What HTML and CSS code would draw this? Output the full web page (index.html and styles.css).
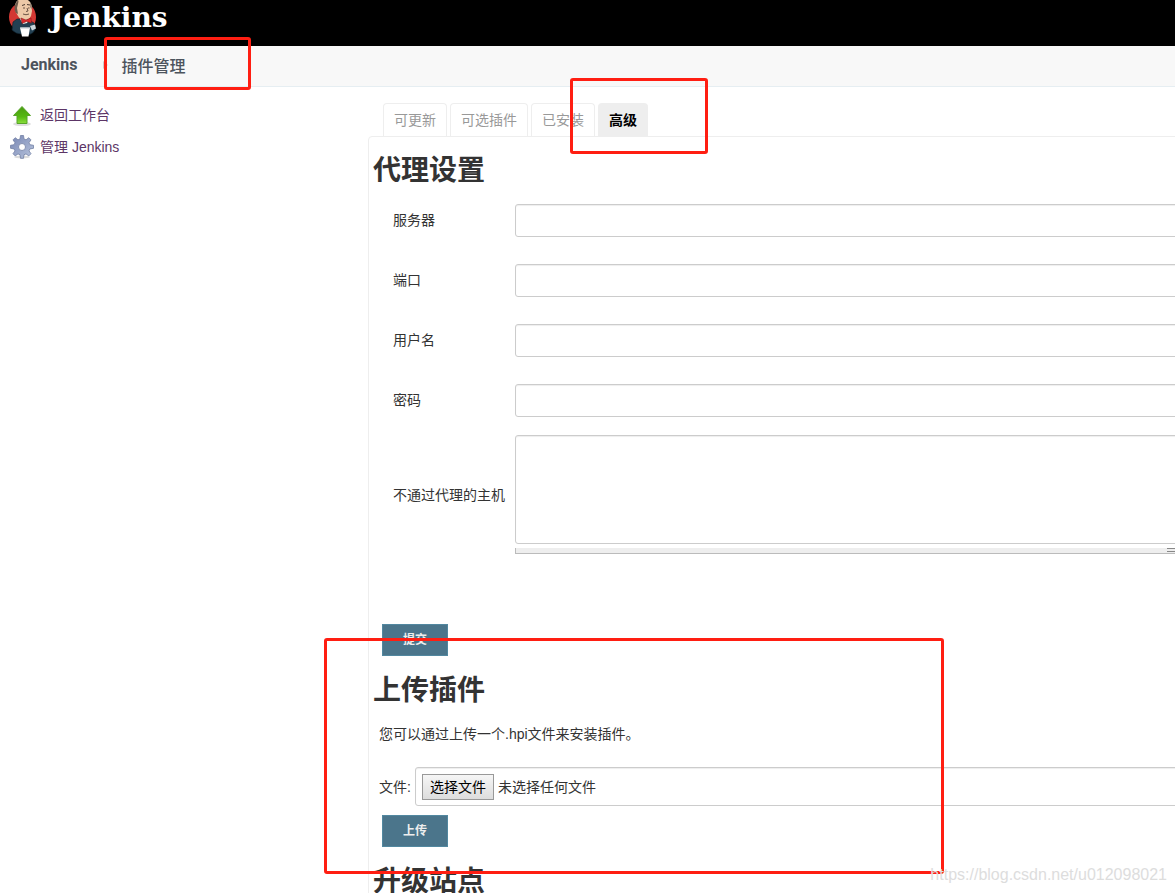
FILE: index.html
```html
<!DOCTYPE html>
<html lang="zh-CN">
<head>
<meta charset="utf-8">
<title>插件管理 [Jenkins]</title>
<link rel="stylesheet" href="styles.css">
</head>
<body>
<header class="header">
  <a class="brand" href="#">
    <svg class="brand-logo" viewBox="0 0 30 40" aria-hidden="true">
      <ellipse cx="14.500" cy="17" rx="13.500" ry="14.500" fill="#d33833"/>
      <path d="M9 19 5 22 4 30q4 4 9 4l7 1q5-1 7-5l-1-7-7-4z" fill="#234052" stroke="#0c1c26" stroke-width=".6"/>
      <path d="M12 19l3 5 4-1 2-3z" fill="#f4f1ea"/>
      <path d="M7 7Q7-1 15-1q8 0 8.500 8l.5 4-1 5q-2 4-6 4-5 0-7-4Q7 12 7 7z" fill="#edc9a8"/>
      <path d="M8 13Q5 8 8 3l2-3q1 1 0 4l-1 4 1 6z" fill="#6d5a4c"/>
      <path d="M22 2q3 4 1.500 7L22 7z" fill="#9a8876"/>
      <path d="M14 5.500l3-1M19 4.500l3 .5" fill="none" stroke="#4c3a30" stroke-width="1"/>
      <path d="M15 8h2M20 8h1.500M19 8l1 3-2 .5M15 14q3 1.500 6 0" fill="none" stroke="#5c4639" stroke-width=".9"/>
      <path d="M13 18l5 2 5-2 .5 5-5-1.500-4.500 2z" fill="#d92b2d" stroke="#7d1517" stroke-width=".5"/>
      <path d="M22 26l5-1.500 1 4-4 2z" fill="#c8d3d9"/>
      <path d="M12 27.500h10l-1.500 9h-6.500z" fill="#fff"/>
      <path d="M12.500 28h9" stroke="#b9c5cb" stroke-width="1"/>
    </svg>
    <span class="brand-name">Jenkins</span>
  </a>
</header>
<nav class="breadcrumbs" aria-label="breadcrumb">
  <a href="#">Jenkins</a>
  <span class="crumb-arrow"></span>
  <a href="#">插件管理</a>
</nav>
<div class="layout">
  <aside class="side">
    <a class="task" href="#">
      <svg class="task-icon" viewBox="0 0 24 24" aria-hidden="true">
        <defs>
          <linearGradient id="green" x2="0" y2="1"><stop offset="0" stop-color="#4a9a12"/><stop offset=".6" stop-color="#55b812"/><stop offset="1" stop-color="#8ade3c"/></linearGradient>
          <linearGradient id="steel" x2="1" y2="1"><stop offset="0" stop-color="#7685b3"/><stop offset="1" stop-color="#b9c5dd"/></linearGradient>
        </defs>
        <ellipse cx="12" cy="21" rx="9" ry="2" fill="#dedede"/>
        <path d="M12 3.500 20.500 12.500H17V20.500H7V12.500H3.500z" fill="url(#green)" stroke="#58a52a"/>
      </svg>
      <span>返回工作台</span>
    </a>
    <a class="task" href="#">
      <svg class="task-icon" viewBox="0 0 24 24" aria-hidden="true">
        <ellipse cx="12" cy="22" rx="8" ry="1.500" fill="#dcdcdc"/>
        <path fill-rule="evenodd" d="M10.500.500h3l.5 3.500 2 .8 2.800-2.100 2.200 2.200-2 2.800.9 2 3.600.6v3l-3.600.6-.9 2 2 2.800-2.200 2.200-2.800-2-2 .8-.5 3.600h-3l-.5-3.600-2-.8-2.800 2L3 18.700l2-2.800-.9-2-3.600-.6v-3l3.600-.6.9-2-2-2.800 2.200-2.200L8 4.800l2-.8zM12 8.500a3.500 3.500 0 1 0 0 7 3.500 3.500 0 0 0 0-7z" fill="url(#steel)" stroke="#7280a5" stroke-width=".8"/>
      </svg>
      <span>管理 Jenkins</span>
    </a>
  </aside>
  <main class="main">
    <nav class="tabs">
      <a class="tab" href="#">可更新</a>
      <a class="tab" href="#">可选插件</a>
      <a class="tab" href="#">已安装</a>
      <a class="tab tab-active" href="#">高级</a>
    </nav>
    <div class="panel">
      <h1>代理设置</h1>
      <form class="proxy">
        <div class="row"><label for="server">服务器</label><input class="field" id="server" type="text"></div>
        <div class="row"><label for="port">端口</label><input class="field" id="port" type="text"></div>
        <div class="row"><label for="user">用户名</label><input class="field" id="user" type="text"></div>
        <div class="row"><label for="pass">密码</label><input class="field" id="pass" type="password"></div>
        <div class="row row-area">
          <label for="hosts">不通过代理的主机</label>
          <div class="area">
            <textarea class="field" id="hosts"></textarea>
            <div class="handle"><span class="grip"></span></div>
          </div>
        </div>
        <button class="button" type="button">提交</button>
      </form>
      <h1>上传插件</h1>
      <form class="upload">
        <p>您可以通过上传一个.hpi文件来安装插件。</p>
        <div class="file-row">
          <label for="file">文件:</label>
          <label class="field file-box" for="file">
            <input class="file-input" id="file" type="file">
            <span class="file-choose">选择文件</span>
            <span>未选择任何文件</span>
          </label>
        </div>
        <button class="button" type="button">上传</button>
      </form>
      <h1>升级站点</h1>
    </div>
  </main>
</div>
<div class="mark mark-crumb"></div>
<div class="mark mark-tab"></div>
<div class="mark mark-upload"></div>
<div class="watermark">https://blog.csdn.net/u012098021</div>
</body>
</html>
```

FILE: styles.css
```css
* { box-sizing: border-box; }

body {
  margin: 0;
  position: relative;
  height: 100vh;
  overflow: hidden;
  background: #fff;
  color: #333;
  font: 14px/20px "Liberation Sans", "Noto Sans CJK SC", sans-serif;
}

a { text-decoration: none; }

.header { height: 46px; background: #000; }

.brand {
  display: flex;
  gap: 12px;
  padding-left: 8px;
  color: #fff;
}

.brand-logo { width: 30px; height: 40px; }

.brand-name {
  font: bold 28px/36px "DejaVu Serif", serif;
}

.breadcrumbs {
  display: flex;
  align-items: center;
  height: 41px;
  padding: 0 21px 2px;
  background: #f8f8f8;
  border-bottom: 1px solid #e6eef2;
}

.breadcrumbs a {
  color: #4d545d;
  font: 500 16px/24px "Noto Sans CJK SC", sans-serif;
}

.breadcrumbs a:first-child {
  font: bold 16px/24px Roboto, sans-serif;
}

.crumb-arrow {
  margin: 0 14px 0 25px;
  border: 4px solid transparent;
  border-left: 5px solid #ccc;
  border-right: 0;
}

.layout { display: flex; }

.side {
  flex: none;
  width: 368px;
  padding: 16px 10px;
}

.task {
  display: flex;
  align-items: center;
  gap: 6px;
  height: 24px;
  margin-bottom: 8px;
  color: #5c3566;
}

.task-icon { width: 24px; height: 24px; }

.main {
  flex: 1;
  min-width: 0;
  margin-right: -20px;
  padding-top: 16px;
}

.tabs {
  display: flex;
  gap: 3px;
  padding-left: 15px;
}

.tab {
  height: 33px;
  padding: 6px 10px;
  border: 1px solid #eee;
  border-bottom: 0;
  border-radius: 4px 4px 0 0;
  color: #999;
}

.tab-active {
  background: #eee;
  color: #000;
  font-weight: bold;
}

.panel {
  padding: 15px 0 0 4px;
  border: 1px solid #eee;
  border-radius: 4px 0 0 0;
}

h1 {
  margin: 0;
  font-size: 28px;
  line-height: 38px;
}

.proxy { padding: 0 0 16px 9px; }

.row {
  display: grid;
  grid-template-columns: 122px 1fr;
  align-items: center;
  height: 60px;
  padding-left: 11px;
}

.field {
  display: block;
  width: 100%;
  height: 33px;
  border: 1px solid #ccc;
  border-radius: 3px;
  background: #fff;
  box-shadow: inset 0 1px 1px #eee;
}

.row-area {
  height: 119px;
  margin: 5px 0 70px;
}

textarea.field { height: 109px; resize: none; }

.handle {
  height: 6px;
  margin-top: 4px;
  padding-right: 16px;
  background: #eee;
  border: 1px solid #bbb;
  border-top: 0;
}

.grip {
  display: block;
  width: 10px;
  height: 4px;
  margin-left: auto;
  border: 1px solid #888;
  border-width: 1px 0;
}

.button {
  display: block;
  height: 32px;
  padding: 0 20px;
  border: 1px solid #5288a0;
  background: #4b758b;
  color: #eee;
  font: bold 12px/20px "Liberation Sans", "Noto Sans CJK SC", sans-serif;
}

.upload { padding: 14px 0 16px 6px; }

.upload p { margin: 0 0 23px; }

.file-row {
  display: flex;
  align-items: center;
  gap: 4px;
  margin-bottom: 9px;
}

.file-row > label:first-child { flex: none; }

.file-box {
  display: flex;
  align-items: center;
  gap: 4px;
  height: 39px;
  padding-left: 6px;
}

.file-input {
  position: absolute;
  width: 1px;
  height: 1px;
  opacity: 0;
}

.file-choose {
  padding: 2px 7px;
  border: 1px solid #999;
  background: linear-gradient(#f6f6f6, #ddd);
  color: #000;
}

.upload .button { margin-left: 3px; }

.mark {
  position: absolute;
  border: 3px solid #ff1e12;
  border-radius: 3px;
  pointer-events: none;
}

.mark-crumb { left: 104px; top: 37px; width: 147px; height: 53px; }
.mark-tab { left: 570px; top: 78px; width: 138px; height: 76px; }
.mark-upload { left: 324px; top: 638px; width: 620px; height: 236px; }

.watermark {
  position: absolute;
  right: 8px;
  bottom: 8px;
  color: #ddd;
  font-size: 16px;
}
```
